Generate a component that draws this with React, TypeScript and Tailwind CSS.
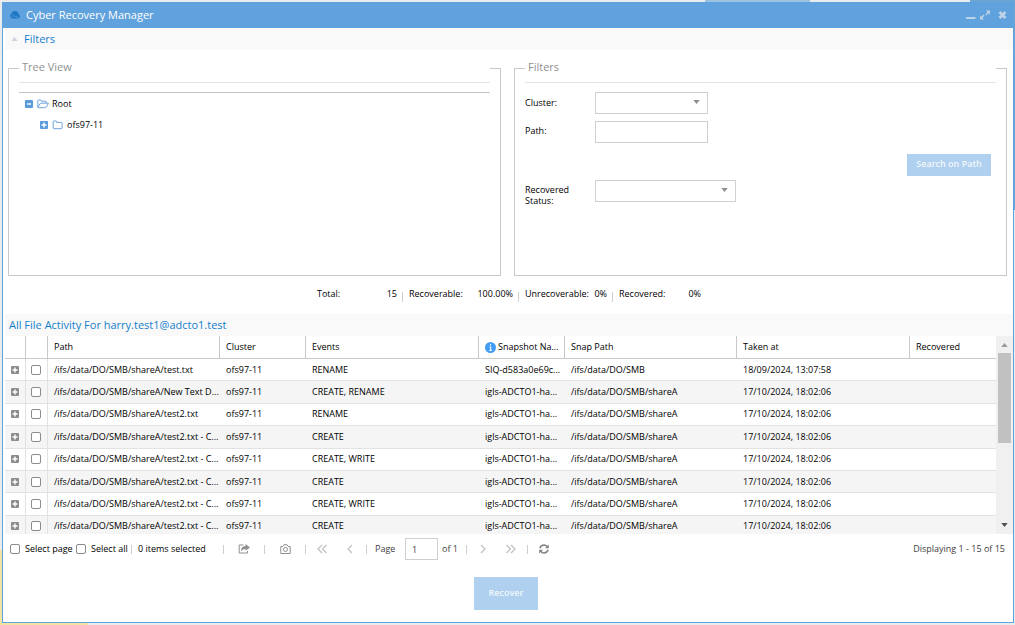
import { ReactNode } from 'react';

type ActivityRow = {
  path: string;
  events: string;
  snapshot: string;
  snapPath: string;
  takenAt: string;
};

const CLUSTER = 'ofs97-11';

const rows: ActivityRow[] = [
  {
    path: '/ifs/data/DO/SMB/shareA/test.txt',
    events: 'RENAME',
    snapshot: 'SIQ-d583a0e69c...',
    snapPath: '/ifs/data/DO/SMB',
    takenAt: '18/09/2024, 13:07:58',
  },
  ...[
    ['New Text D...', 'CREATE, RENAME'],
    ['test2.txt', 'RENAME'],
    ['test2.txt - C...', 'CREATE'],
    ['test2.txt - C...', 'CREATE, WRITE'],
    ['test2.txt - C...', 'CREATE'],
    ['test2.txt - C...', 'CREATE, WRITE'],
    ['test2.txt - C...', 'CREATE'],
  ].map(([file, events]) => ({
    path: `/ifs/data/DO/SMB/shareA/${file}`,
    events,
    snapshot: 'igls-ADCTO1-ha...',
    snapPath: '/ifs/data/DO/SMB/shareA',
    takenAt: '17/10/2024, 18:02:06',
  })),
];

const stats = [
  { label: 'Total:', value: '15', width: 'w-20' },
  { label: 'Recoverable:', value: '100.00%', width: 'w-[104px]' },
  { label: 'Unrecoverable:', value: '0%', width: 'w-[82px]' },
  { label: 'Recovered:', value: '0%', width: 'w-[82px]' },
];

function ToggleIcon({ open, className }: { open?: boolean; className: string }) {
  return (
    <svg viewBox="0 0 8 8" className={`size-2 shrink-0 ${className}`} aria-hidden="true">
      <rect width="8" height="8" rx="1" fill="currentColor" />
      <path d={open ? 'M2 4h4' : 'M1.5 4h5M4 1.5v5'} stroke="#fff" strokeWidth="1.4" />
    </svg>
  );
}

function FolderIcon({ open }: { open?: boolean }) {
  return (
    <svg viewBox="0 0 12 10" className="h-[10px] w-3 shrink-0" fill="none" stroke="#6fa3df" strokeLinejoin="round" aria-hidden="true">
      {open ? (
        <path d="M.8 8.2V1.6Q.8 1 1.400 1h2.200q.6 0 .6.6v.6h4.400q.6 0 .6.6v1.400M.8 8.2l2.400-3.600q.2-.4.8-.4h7.500L9.400 8.100q-.3.6-.9.6H1.300Q.8 8.700.8 8.200z" />
      ) : (
        <path d="M1.200 1.600Q1.200 1 1.800 1h2.100q.6 0 .6.6v.8h5q.6 0 .6.6v5.100q0 .6-.6.6H1.800q-.6 0-.6-.6z" />
      )}
    </svg>
  );
}

function Caret({ up, className }: { up?: boolean; className: string }) {
  return (
    <svg viewBox="0 0 8 5" className={className} fill="currentColor" aria-hidden="true">
      <path d={up ? 'M4 0l4 5H0z' : 'M0 0h8L4 5z'} />
    </svg>
  );
}

function Checkbox({ id, label }: { id: string; label?: string }) {
  return (
    <input
      id={id}
      type="checkbox"
      aria-label={label}
      className="block size-[10px] shrink-0 appearance-none rounded-[2px] border border-[#8c8c8c] bg-white checked:bg-[#5fa2dd]"
    />
  );
}

function SelectBox({ id, width }: { id: string; width: string }) {
  return (
    <div className={`relative ${width}`}>
      <select id={id} className="block h-[22px] w-full appearance-none border border-[#cfcfcf] bg-white px-2">
        <option value="" />
      </select>
      <Caret className="pointer-events-none absolute top-2 right-2 h-1 w-[7px] text-[#8f8f8f]" />
    </div>
  );
}

function Panel({ title, children }: { title: string; children: ReactNode }) {
  return (
    <fieldset className="min-h-[222px] min-w-0 border border-[#c9c9c9] px-[10px]">
      <legend className="h-[29px] w-full border-b border-[#e4e4e4] px-[3px] text-[11px] leading-[26px] text-[#919191]">
        {title}
      </legend>
      {children}
    </fieldset>
  );
}

function Separator() {
  return <span className="mx-[2px] h-[9px] w-px shrink-0 bg-[#cfcfcf]" />;
}

function BarButton({ label, wide, children }: { label: string; wide?: boolean; children: ReactNode }) {
  return (
    <button type="button" aria-label={label} className={`flex h-5 shrink-0 items-center justify-center ${wide ? 'w-9' : 'w-7'}`}>
      {children}
    </button>
  );
}

function Chevrons({ right, double }: { right?: boolean; double?: boolean }) {
  const d = double ? 'M5 1L1 5l4 4M9.5 1l-4 4 4 4' : 'M7 1L3 5l4 4';
  return (
    <svg viewBox="0 0 10 10" className={`size-[10px] ${right ? 'rotate-180' : ''}`} fill="none" stroke="#c4c4c4" strokeWidth="1.4" aria-hidden="true">
      <path d={d} />
    </svg>
  );
}

function TitleBar() {
  return (
    <header className="flex h-[26px] items-center bg-[#5fa2dd] pr-[5px] pl-[7px] text-white">
      <svg viewBox="0 0 10 10" className="size-[10px]" aria-hidden="true">
        <path d="M0 6.5Q0 4.2 1.5 3.7 2 1 5 1t3.5 2.700Q10 4.500 10 7L8.500 8.500h-7z" fill="#1f78c4" />
        <path d="M.5 7Q4 5 9.500 7.500M2 4.500l6 3.500" stroke="#4a94d8" strokeWidth=".7" fill="none" />
      </svg>
      <h1 className="ml-[6px] flex-1 text-[11px]">Cyber Recovery Manager</h1>
      <div className="flex items-center gap-1 text-[#bdd3e8]">
        <button type="button" aria-label="Minimize">
          <svg viewBox="0 0 10 10" className="size-[10px]" fill="currentColor">
            <path d="M0 7h9.500v2H0z" />
          </svg>
        </button>
        <button type="button" aria-label="Maximize">
          <svg viewBox="0 0 10 10" className="size-[10px]" fill="currentColor">
            <path d="M6 .5h4v4L8.600 3.200 6.400 5.400l-1-1L7.500 2.100zM4 9.500H0v-4l1.400 1.300 2.200-2.200 1 1-2.200 2.300z" />
          </svg>
        </button>
        <button type="button" aria-label="Close" className="pl-1">
          <svg viewBox="0 0 10 10" className="size-[10px]" stroke="currentColor" strokeWidth="2.8">
            <path d="M1.500 2l6 6M7.500 2l-6 6" />
          </svg>
        </button>
      </div>
    </header>
  );
}

function FilterForm() {
  return (
    <Panel title="Filters">
      <div className="flex flex-col pt-[9px]">
        <div className="flex items-center">
          <label htmlFor="cluster" className="w-[70px]">Cluster:</label>
          <SelectBox id="cluster" width="w-[113px]" />
        </div>
        <div className="mt-[7px] flex items-start">
          <label htmlFor="path" className="w-[70px] pt-1">Path:</label>
          <input id="path" type="text" className="h-[22px] w-[113px] border border-[#cfcfcf] px-2" />
        </div>
        <button type="button" className="mt-[11px] mr-[5px] h-[22px] w-[84px] self-end bg-[#afd0ee] pb-[2px] font-semibold text-[#f1f7fc]">
          Search on Path
        </button>
        <div className="mt-1 flex items-start">
          <label htmlFor="status" className="w-[70px] pt-1 leading-[11px]">
            Recovered
            <br />
            Status:
          </label>
          <SelectBox id="status" width="w-[141px]" />
        </div>
      </div>
    </Panel>
  );
}

function TreeView() {
  return (
    <Panel title="Tree View">
      <ul className="mt-[9px] border-t border-[#c4c4c4] pl-[6px] leading-[21px]">
        <li>
          <div className="flex items-center">
            <ToggleIcon open className="text-[#5b9bdc]" />
            <span className="ml-1"><FolderIcon open /></span>
            <span className="ml-[3px]">Root</span>
          </div>
          <ul className="pl-[15px]">
            <li className="flex items-center">
              <ToggleIcon className="text-[#5b9bdc]" />
              <span className="ml-1"><FolderIcon /></span>
              <span className="ml-[3px]">{CLUSTER}</span>
            </li>
          </ul>
        </li>
      </ul>
    </Panel>
  );
}

function ActivityTable() {
  const head = 'border-r border-b border-[#c9c9c9] pl-[6px] text-left font-normal whitespace-nowrap';
  const cell = 'overflow-hidden pl-[6px] whitespace-nowrap';
  return (
    <div className="flex h-[198px] overflow-hidden">
      <div className="min-w-0 flex-1 overflow-hidden">
        <table className="h-[202px] w-full table-fixed border-separate border-spacing-0">
          <colgroup>
            <col className="w-[21px]" />
            <col className="w-[22px]" />
            <col className="w-[172px]" />
            <col className="w-[86px]" />
            <col className="w-[173px]" />
            <col className="w-[86px]" />
            <col className="w-[172px]" />
            <col className="w-[173px]" />
            <col className="w-[86px]" />
          </colgroup>
          <thead>
            <tr className="h-[23px]">
              <th className={head} />
              <th className={head} />
              <th className={head}>Path</th>
              <th className={head}>Cluster</th>
              <th className={head}>Events</th>
              <th className={head}>
                <span className="flex items-center gap-[2px]">
                  <svg viewBox="0 0 11 11" className="size-[11px] shrink-0" aria-hidden="true">
                    <circle cx="5.5" cy="5.5" r="5.5" fill="#449df5" />
                    <path d="M5.5 2v1.5M4.5 4.8h1.200v3.500M4.300 8.400h2.600" stroke="#fff" fill="none" />
                  </svg>
                  Snapshot Na...
                </span>
              </th>
              <th className={head}>Snap Path</th>
              <th className={head}>Taken at</th>
              <th className="border-b border-[#c9c9c9] pl-[6px] text-left font-normal">Recovered</th>
            </tr>
          </thead>
          <tbody>
            {rows.map((row, i) => (
              <tr key={i} className="even:bg-[#f5f5f5] [&>td]:border-b [&>td]:border-[#e2e2e2]">
                <td className="border-r">
                  <button type="button" aria-label="Expand row" className="mx-auto block">
                    <ToggleIcon className="text-[#8c8c8c]" />
                  </button>
                </td>
                <td className="border-r pl-[5px]">
                  <Checkbox id={`row-${i}`} label={`Select ${row.path}`} />
                </td>
                <td className={cell}>{row.path}</td>
                <td className={cell}>{CLUSTER}</td>
                <td className={cell}>{row.events}</td>
                <td className={cell}>{row.snapshot}</td>
                <td className={cell}>{row.snapPath}</td>
                <td className={cell}>{row.takenAt}</td>
                <td className={cell} />
              </tr>
            ))}
          </tbody>
        </table>
      </div>
      <div className="flex w-[17px] shrink-0 flex-col items-center bg-[#f0f0f0] pt-[7px] pb-[7px]">
        <Caret up className="h-1 w-[7px] shrink-0 text-[#9a9a9a]" />
        <div className="mt-[6px] h-[90px] w-[13px] bg-[#c1c1c1]" />
        <Caret className="mt-auto h-1 w-[7px] shrink-0 text-[#505050]" />
      </div>
    </div>
  );
}

function PagingBar() {
  return (
    <div className="flex h-[30px] items-center pr-2 pl-[5px] whitespace-nowrap">
      <Checkbox id="select-page" />
      <label htmlFor="select-page" className="w-[56px] pl-[5px]">Select page</label>
      <Checkbox id="select-all" />
      <label htmlFor="select-all" className="w-[43px] pl-[5px]">Select all</label>
      <Separator />
      <span className="w-[87px] pl-1">0 items selected</span>
      <Separator />
      <BarButton label="Export" wide>
        <svg viewBox="0 0 12 10" className="h-[10px] w-3" aria-hidden="true">
          <path d="M5.500 1H1.200v8h8.300V7" fill="none" stroke="#8f8f8f" />
          <path d="M7.500 0L12 3.400 7.500 6.800V5Q4 4.800 2.800 7.500 3 2.200 7.500 1.900z" fill="#8f8f8f" />
        </svg>
      </BarButton>
      <Separator />
      <BarButton label="Take snapshot" wide>
        <svg viewBox="0 0 11 10" className="h-[10px] w-[11px]" fill="none" stroke="#8f8f8f" aria-hidden="true">
          <path d="M.8 2.500h2L4 .7h3l1.200 1.800h2v7H.8z" />
          <circle cx="5.500" cy="5.500" r="2" />
        </svg>
      </BarButton>
      <Separator />
      <BarButton label="First page"><Chevrons double /></BarButton>
      <BarButton label="Previous page"><Chevrons /></BarButton>
      <Separator />
      <label htmlFor="page" className="w-9 pl-[6px] text-[#404040]">Page</label>
      <input id="page" type="text" defaultValue="1" className="h-[22px] w-[33px] border border-[#cfcfcf] px-[6px] text-[#404040]" />
      <span className="w-[26px] pl-1 text-[#404040]">of 1</span>
      <Separator />
      <BarButton label="Next page"><Chevrons right /></BarButton>
      <BarButton label="Last page"><Chevrons right double /></BarButton>
      <Separator />
      <BarButton label="Refresh">
        <svg viewBox="0 0 10 10" className="size-[10px]" fill="none" stroke="#858585" strokeWidth="1.5" aria-hidden="true">
          <path d="M.9 4.200Q1.700 1.200 5 1.100 7 1.200 8.400 2.800M9.100 5.800Q8.300 8.800 5 8.900 3 8.800 1.600 7.200" />
          <path d="M9.800.5v3.700H6zM.2 9.500V5.800H4z" fill="#858585" stroke="none" />
        </svg>
      </BarButton>
      <span className="ml-auto text-[#404040]">Displaying 1 - 15 of 15</span>
    </div>
  );
}

export default function App() {
  return (
    <div className="relative bg-[#e9ebed] pt-[2px] pr-px pb-[2px] pl-[2px] font-['Open_Sans',sans-serif] text-[9px] leading-3 text-black">
      {/* desktop shapes behind the window */}
      <div className="absolute top-0 right-[205px] h-1 w-[105px] bg-[#9cc3e2]" />
      <div className="absolute top-0 right-0 h-[210px] w-[45px] bg-[#6ba5d6]" />
      <div className="absolute bottom-0 left-0 h-[75px] w-[88px] bg-[#f3e3a0]" />

      <main className="relative border-r border-b border-l border-[#5fa2dd] bg-white">
        <TitleBar />
        <div className="pl-[2px]">
          <button type="button" className="flex h-[22px] w-full items-center bg-[#f9f9f9] pl-[6px] text-[11px] text-[#157fcc]">
            <Caret up className="h-1 w-[7px] text-[#cfd4de]" />
            <span className="ml-[6px]">Filters</span>
          </button>
          <div className="grid grid-cols-2 gap-[13px] pt-1 pr-[6px] pl-[3px]">
            <TreeView />
            <FilterForm />
          </div>

          <dl className="flex h-[38px] items-center justify-center pb-[2px]">
            {stats.map((stat, i) => (
              <div key={stat.label} className="flex items-center">
                {i > 0 && <span className="mt-[6px] mr-[6px] ml-[5px] h-[10px] w-px bg-[#cfcfcf]" />}
                <div className={`flex justify-between ${stat.width}`}>
                  <dt>{stat.label}</dt>
                  <dd>{stat.value}</dd>
                </div>
              </div>
            ))}
          </dl>

          <h2 className="flex h-[22px] items-center bg-[#f9f9f9] pl-1 text-[11px] text-[#157fcc]">
            All File Activity For harry.test1@adcto1.test
          </h2>
          <ActivityTable />
          <PagingBar />
          <div className="flex justify-center pt-[13px] pr-[6px] pb-3">
            <button type="button" className="h-[33px] w-16 bg-[#afd0ee] pb-[2px] font-semibold text-[#f1f7fc]">
              Recover
            </button>
          </div>
        </div>
      </main>
    </div>
  );
}
